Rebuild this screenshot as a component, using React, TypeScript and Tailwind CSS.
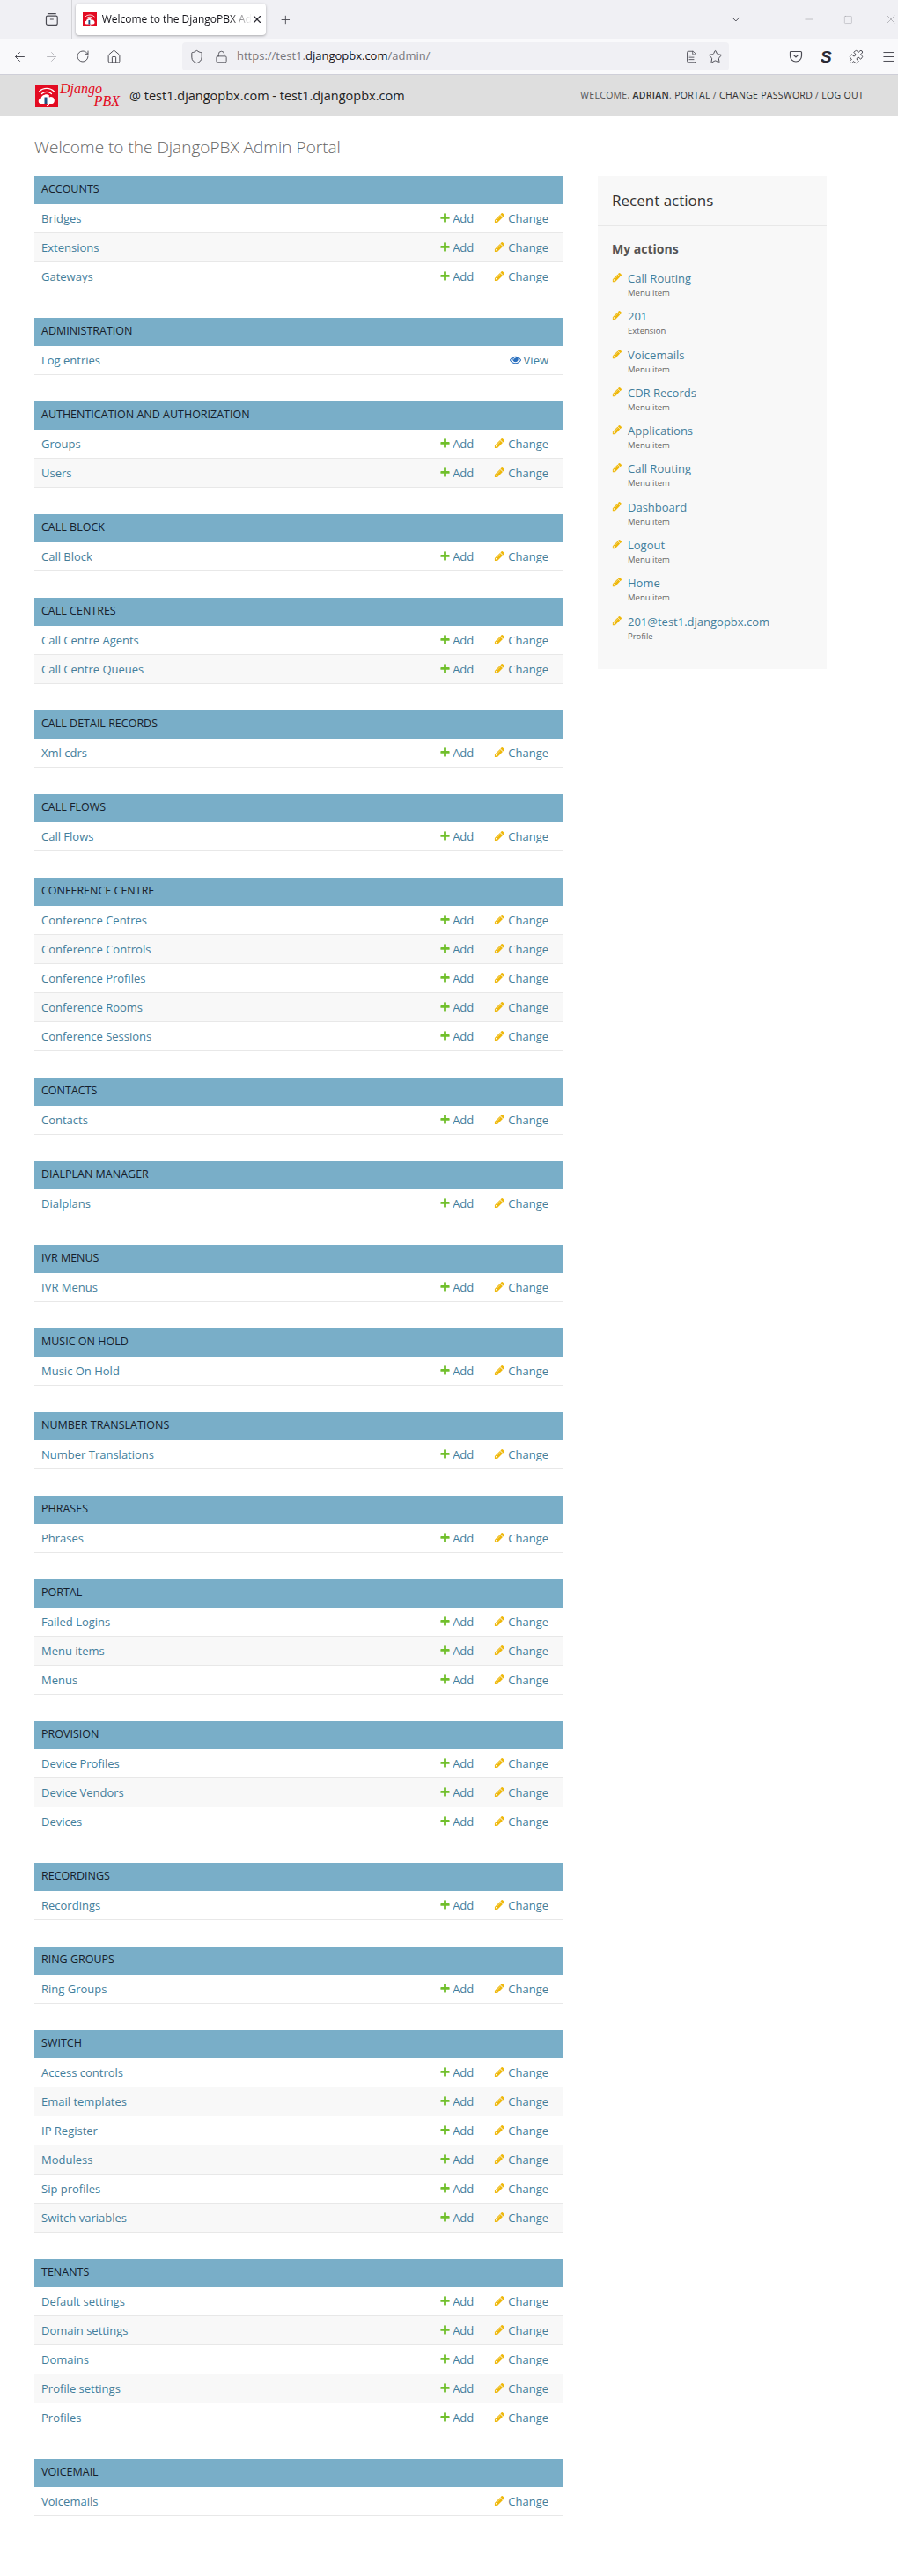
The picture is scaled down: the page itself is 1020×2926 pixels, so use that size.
import React from "react";
import { ArrowLeft, ArrowRight, RotateCw, Home, Shield, Lock, FileText, Star, ChevronDown, Minus, Square, X, Plus, Puzzle, Menu } from "lucide-react";

type Section = { title: string; rows: string[]; view?: boolean; noAdd?: boolean };

const sections: Section[] = [
  { title: "Accounts", rows: ["Bridges", "Extensions", "Gateways"] },
  { title: "Administration", rows: ["Log entries"], view: true },
  { title: "Authentication and Authorization", rows: ["Groups", "Users"] },
  { title: "Call Block", rows: ["Call Block"] },
  { title: "Call Centres", rows: ["Call Centre Agents", "Call Centre Queues"] },
  { title: "Call Detail Records", rows: ["Xml cdrs"] },
  { title: "Call Flows", rows: ["Call Flows"] },
  { title: "Conference Centre", rows: ["Conference Centres", "Conference Controls", "Conference Profiles", "Conference Rooms", "Conference Sessions"] },
  { title: "Contacts", rows: ["Contacts"] },
  { title: "Dialplan Manager", rows: ["Dialplans"] },
  { title: "IVR Menus", rows: ["IVR Menus"] },
  { title: "Music On Hold", rows: ["Music On Hold"] },
  { title: "Number Translations", rows: ["Number Translations"] },
  { title: "Phrases", rows: ["Phrases"] },
  { title: "Portal", rows: ["Failed Logins", "Menu items", "Menus"] },
  { title: "Provision", rows: ["Device Profiles", "Device Vendors", "Devices"] },
  { title: "Recordings", rows: ["Recordings"] },
  { title: "Ring Groups", rows: ["Ring Groups"] },
  { title: "Switch", rows: ["Access controls", "Email templates", "IP Register", "Moduless", "Sip profiles", "Switch variables"] },
  { title: "Tenants", rows: ["Default settings", "Domain settings", "Domains", "Profile settings", "Profiles"] },
  { title: "Voicemail", rows: ["Voicemails"], noAdd: true },
];

const actions = [
  ["Call Routing", "Menu item"],
  ["201", "Extension"],
  ["Voicemails", "Menu item"],
  ["CDR Records", "Menu item"],
  ["Applications", "Menu item"],
  ["Call Routing", "Menu item"],
  ["Dashboard", "Menu item"],
  ["Logout", "Menu item"],
  ["Home", "Menu item"],
  ["201@test1.djangopbx.com", "Profile"],
];

const AddIcon = () => (
  <svg viewBox="0 0 1792 1792" className="w-[13px] h-[13px] mr-[2px] -mt-[3px]">
    <path fill="#70bf2b" d="M1600 796v192q0 40-28 68t-68 28h-416v416q0 40-28 68t-68 28h-192q-40 0-68-28t-28-68v-416h-416q-40 0-68-28t-28-68v-192q0-40 28-68t68-28h416v-416q0-40 28-68t68-28h192q40 0 68 28t28 68v416h416q40 0 68 28t28 68z" />
  </svg>
);

const PencilIcon = ({ className = "" }: { className?: string }) => (
  <svg viewBox="0 0 1792 1792" className={className}>
    <path fill="#efb80b" d="M491 1536l91-91-235-235-91 91v107h128v128h107zm523-928q0-22-22-22-10 0-17 7l-542 542q-7 7-7 17 0 22 22 22 10 0 17-7l542-542q7-7 7-17zm-54-192l416 416-832 832h-416v-416zm683 96q0 53-37 90l-166 166-416-416 166-165q36-38 90-38 53 0 91 38l235 234q37 39 37 91z" />
  </svg>
);

const EyeIcon = () => (
  <svg viewBox="0 0 1792 1792" className="w-[13px] h-[13px] mr-[3px] -mt-[3px]">
    <path fill="#2b70bf" d="M1664 960q-152-236-381-353 61 104 61 225 0 185-131.500 316.500t-316.500 131.500-316.500-131.500-131.500-316.500q0-121 61-225-229 117-381 353 133 205 333.500 326.500t434.500 121.500 434.500-121.500 333.500-326.500zm-720-384q0-20-14-34t-34-14q-125 0-214.500 89.500t-89.500 214.500q0 20 14 34t34 14 34-14 14-34q0-86 61-147t147-61q20 0 34-14t14-34zm848 384q0 34-20 69-140 230-376.500 368.500t-499.500 138.500-499.500-139-376.500-368q-20-35-20-69t20-69q140-229 376.500-368t499.500-139 499.500 139 376.500 368q20 35 20 69z" />
  </svg>
);

const LogoMark = ({ className = "" }: { className?: string }) => (
  <svg viewBox="0 0 26 26" className={className}>
    <rect width="26" height="26" fill="#e30b22" />
    <g fill="none" stroke="#fff" strokeWidth="1.300" strokeLinecap="round">
      <path d="M4.500 8a12 12 0 0 1 17 0" />
      <path d="M7.500 10.500a8 8 0 0 1 11 0" />
      <path d="M10.500 13a4 4 0 0 1 5 0" />
    </g>
    <path fill="#fff" d="M7 22a3 3 0 0 1-.5-6 5 5 0 0 1 9.500-1.500 3.800 3.800 0 0 1 3.500 7.500z" />
    <rect x="10.500" y="14.500" width="3" height="7.500" fill="#1f4f80" />
    <path d="M13 23.500a2.500 2.500 0 0 0 3-2" fill="none" stroke="#fff" strokeWidth="1" />
  </svg>
);

const BrowserChrome = () => (
  <div className="font-['Open_Sans',sans-serif]">
    <div className="h-[44px] bg-[#f0f0f4] flex items-center relative">
      <svg viewBox="0 0 16 16" className="w-[16px] h-[16px] ml-[51px] text-[#4a4a52]" fill="none" stroke="currentColor" strokeWidth="1.2">
        <path d="M3 1.500h10M1.500 5.500a1.500 1.500 0 0 1 1.500-1.500h10a1.500 1.500 0 0 1 1.500 1.500v7a2 2 0 0 1-2 2h-9a2 2 0 0 1-2-2zM6 8h4" />
      </svg>
      <div className="self-stretch w-px bg-[#d4d4d8] ml-[14px]" />
      <div className="ml-[4px] w-[221px] h-[36px] bg-white rounded-[4px] shadow-[0_1px_3px_rgba(0,0,0,0.3)] flex items-center pl-[8px]">
        <LogoMark className="w-[16px] h-[16px] shrink-0" />
        <span className="ml-[6px] w-[170px] overflow-hidden whitespace-nowrap text-[12px] text-[#15141a] [mask-image:linear-gradient(to_right,black_85%,transparent)]">Welcome to the DjangoPBX Admin Portal</span>
        <X size={14} className="text-[#2b2a33] shrink-0 -ml-[1px]" />
      </div>
      <Plus size={15} className="ml-[15px] text-[#4a4a52]" strokeWidth={1.5} />
      <ChevronDown size={16} className="ml-[496px] text-[#4a4a52]" strokeWidth={1.5} />
      <Minus size={14} className="ml-[68px] text-[#9a9aa0]" strokeWidth={1} />
      <Square size={11} className="ml-[33px] text-[#9a9aa0]" strokeWidth={1} />
      <X size={16} className="ml-[35px] shrink-0 text-[#9a9aa0]" strokeWidth={1} />
    </div>
    <div className="h-[41px] bg-[#f9f9fb] border-b border-[#cfcfd8] flex items-center relative overflow-hidden">
      <ArrowLeft size={17} className="ml-[14px] shrink-0 text-[#4a4a52]" strokeWidth={1.4} />
      <ArrowRight size={17} className="ml-[19px] shrink-0 text-[#b8b8bd]" strokeWidth={1.4} />
      <RotateCw size={16} className="ml-[19px] shrink-0 text-[#4a4a52]" strokeWidth={1.4} />
      <Home size={17} className="ml-[19px] shrink-0 text-[#4a4a52]" strokeWidth={1.4} />
      <div className="ml-[69px] w-[621px] h-[32px] bg-[#f0f0f4] rounded-[4px] flex items-center shrink-0">
        <Shield size={17} className="ml-[8px] text-[#4a4a52]" strokeWidth={1.4} />
        <Lock size={15} className="ml-[12px] text-[#4a4a52]" strokeWidth={1.4} />
        <span className="ml-[10px] text-[13px] text-[#77777d] whitespace-nowrap">https://test1.<span className="text-[#15141a]">djangopbx.com</span>/admin/</span>
        <FileText size={15} className="ml-auto text-[#4a4a52]" strokeWidth={1.4} />
        <Star size={17} className="ml-[11px] mr-[7px] text-[#4a4a52]" strokeWidth={1.4} />
      </div>
      <svg viewBox="0 0 16 16" className="w-[16px] h-[16px] ml-[68px] shrink-0 text-[#4a4a52]" fill="none" stroke="currentColor" strokeWidth="1.2">
        <path d="M2.500 2.500h11a1 1 0 0 1 1 1v4a6.500 6.500 0 0 1-13 0v-4a1 1 0 0 1 1-1zM5.500 6.500l2.500 2.500 2.500-2.500" />
      </svg>
      <span className="ml-[20px] w-[12px] shrink-0 text-[19px] leading-none font-black italic font-['Liberation_Sans',sans-serif] text-[#2b2a33]">S</span>
      <Puzzle size={17} className="ml-[20px] shrink-0 text-[#4a4a52]" strokeWidth={1.4} />
      <Menu size={17} className="ml-[20px] shrink-0 text-[#4a4a52]" strokeWidth={1.4} />
    </div>
  </div>
);

const Header = () => (
  <div className="h-[47px] bg-[#dedede] flex items-center pl-[40px] pr-[39px] font-['Open_Sans',sans-serif]">
    <LogoMark className="w-[26px] h-[26px] shrink-0" />
    <div className="w-[68px] h-[29px] ml-[2px] font-['Liberation_Serif',serif] italic text-[#e30b22] text-[16px] leading-[14px]">
      <div>Django</div>
      <div className="text-right">PBX</div>
    </div>
    <span className="ml-[11px] text-[14.500px] text-[#222]">@ test1.djangopbx.com - test1.djangopbx.com</span>
    <div className="ml-auto text-[10.500px] tracking-[0.3px] uppercase text-[#555] whitespace-nowrap">
      Welcome, <strong className="font-semibold text-[#333]">Adrian</strong>. <span className="text-[#333]">Portal</span> / <span className="text-[#333]">Change password</span> / <span className="text-[#333]">Log out</span>
    </div>
  </div>
);

const AppTable = ({ section }: { section: Section }) => (
  <div className="mb-[30px]">
    <div className="h-[32px] bg-[#79aec8] flex items-center px-[8px] pb-[1px] text-[12.500px] uppercase text-[#15202b]">{section.title}</div>
    {section.rows.map((name, i) => (
      <div key={name} className={`h-[33px] flex items-center pt-[2px] pl-[8px] pr-[16px] border-b border-[#e8e8e8] text-[13px] text-[#447e9b] ${i % 2 === 1 ? "bg-[#f8f8f8]" : "bg-white"}`}>
        <span className="mr-auto">{name}</span>
        {section.view ? (
          <span className="flex items-center"><EyeIcon />View</span>
        ) : (
          <>
            {!section.noAdd && <span className="flex items-center mr-[23px]"><AddIcon />Add</span>}
            <span className="flex items-center"><PencilIcon className="w-[13px] h-[13px] mr-[3px] -mt-[3px]" />Change</span>
          </>
        )}
      </div>
    ))}
  </div>
);

const RecentActions = () => (
  <aside className="w-[260px] h-[560px] bg-[#f8f8f8] shrink-0">
    <h2 className="h-[57px] flex items-center px-[16px] border-b border-[#e8e8e8] text-[17px] text-[#333] font-normal">Recent actions</h2>
    <h3 className="mt-[16px] px-[16px] text-[14px] font-bold text-[#555] leading-[20px]">My actions</h3>
    <ul className="mt-[13px] px-[16px]">
      {actions.map(([name, type], i) => (
        <li key={i} className="h-[43.300px] flex">
          <PencilIcon className="w-[12px] h-[12px] mt-[3px] shrink-0" />
          <div className="ml-[6px]">
            <div className="text-[13px] leading-[20px] text-[#447e9b]">{name}</div>
            <div className="text-[9.500px] leading-[14px] text-[#666]">{type}</div>
          </div>
        </li>
      ))}
    </ul>
  </aside>
);

export default function App() {
  return (
    <div className="w-[1020px] h-[2926px] bg-white overflow-hidden font-['Open_Sans',sans-serif]">
      <BrowserChrome />
      <Header />
      <div className="px-[39px]">
        <h1 className="h-[68px] pt-[21px] text-[19px] leading-[28px] font-light text-[#666]">Welcome to the DjangoPBX Admin Portal</h1>
        <div className="flex gap-[40px] items-start">
          <div className="w-[600px] shrink-0">
            {sections.map((s) => (
              <AppTable key={s.title} section={s} />
            ))}
          </div>
          <RecentActions />
        </div>
      </div>
    </div>
  );
}
